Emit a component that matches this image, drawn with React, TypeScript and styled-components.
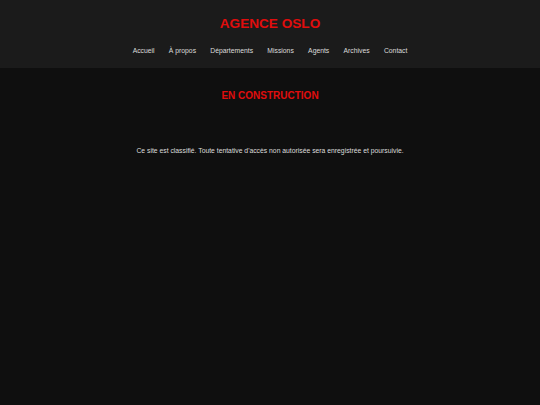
import { FC } from "react";
import styled, { createGlobalStyle } from "styled-components";

const GlobalStyle = createGlobalStyle`
	html, body {
		margin: 0;
		padding: 0;
		background: #0f0f0f;
		font-family: "Liberation Sans", Arial, sans-serif;
	}
	body {
		min-height: 405px;
	}
`;

const Header = styled.header`
	background: #1b1b1b;
	padding: 16px 0 13px;
	display: flex;
	flex-direction: column;
	align-items: center;
`;

const Title = styled.h1`
	margin: 0;
	color: #e00d0d;
	font-size: 13.6px;
	line-height: 16px;
	font-weight: bold;
`;

const Nav = styled.nav`
	margin-top: 15px;
	display: flex;
	gap: 14.3px;
`;

const NavLink = styled.a`
	color: #dcdcdc;
	font-size: 6.8px;
	line-height: 8px;
	text-decoration: none;
`;

const Main = styled.main`
	display: flex;
	flex-direction: column;
	align-items: center;
	padding-top: 22px;
`;

const Heading = styled.h2`
	margin: 0;
	color: #e00d0d;
	font-size: 10px;
	line-height: 12px;
	font-weight: bold;
`;

const Notice = styled.p`
	margin: 45px 0 0;
	color: #dcdcdc;
	font-size: 6.8px;
	line-height: 8px;
`;

const links = ["Accueil", "À propos", "Départements", "Missions", "Agents", "Archives", "Contact"];

const App: FC = () => (
	<>
		<GlobalStyle />
		<Header>
			<Title>AGENCE OSLO</Title>
			<Nav>
				{links.map((l) => (
					<NavLink key={l} href="#">
						{l}
					</NavLink>
				))}
			</Nav>
		</Header>
		<Main>
			<Heading>EN CONSTRUCTION</Heading>
			<Notice>Ce site est classifié. Toute tentative d'accès non autorisée sera enregistrée et poursuivie.</Notice>
		</Main>
	</>
);

export default App;
